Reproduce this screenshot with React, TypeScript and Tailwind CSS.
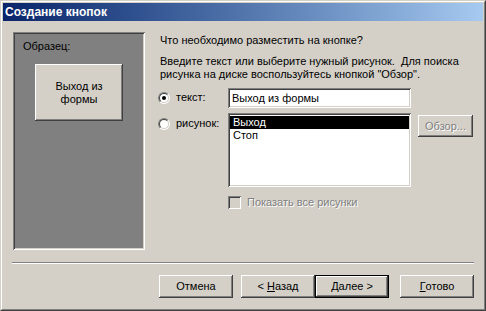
const raised =
  "shadow-[inset_-1px_-1px_#404040,inset_1px_1px_#ffffff,inset_-2px_-2px_#808080,inset_2px_2px_#d4d0c8]";
const sunken =
  "shadow-[inset_1px_1px_#808080,inset_-1px_-1px_#ffffff,inset_2px_2px_#404040,inset_-2px_-2px_#d4d0c8]";

const Radio = ({ checked }: { checked?: boolean }) => (
  <div className="w-[12px] h-[12px] rounded-full border border-t-[#808080] border-l-[#808080] border-r-white border-b-white shrink-0">
    <div className="w-full h-full rounded-full border border-t-[#404040] border-l-[#404040] border-r-[#d4d0c8] border-b-[#d4d0c8] bg-white flex items-center justify-center">
      {checked && <div className="w-[4px] h-[4px] rounded-full bg-black" />}
    </div>
  </div>
);

const Button = ({
  children,
  isDefault,
}: {
  children: React.ReactNode;
  isDefault?: boolean;
}) =>
  isDefault ? (
    <div className="w-[74px] h-[23px] border border-black">
      <div className={`w-full h-full flex items-center justify-center bg-[#d4d0c8] ${raised}`}>
        {children}
      </div>
    </div>
  ) : (
    <div className={`w-[74px] h-[23px] flex items-center justify-center bg-[#d4d0c8] ${raised}`}>
      {children}
    </div>
  );

export default function App() {
  return (
    <div className="w-[486px] h-[311px] bg-[#d4d0c8] border border-t-[#d4d0c8] border-l-[#d4d0c8] border-r-[#404040] border-b-[#404040] font-['Liberation_Sans',Arial,sans-serif] text-[11px] leading-[13px] text-black select-none">
      <div className="h-full border border-t-white border-l-white border-r-[#808080] border-b-[#808080] p-px flex flex-col">
        {/* title bar */}
        <div className="h-[18px] bg-linear-to-r from-[#0a246a] to-[#a6caf0] flex items-center pl-[2px]">
          <span className="text-white font-bold text-[12px]">Создание кнопок</span>
        </div>

        <div className="flex pt-[11px] pl-[10px]">
          {/* sample panel */}
          <div className={`w-[132px] h-[218px] bg-[#808080] ${sunken} pt-[8px] pl-[10px]`}>
            <div>Образец:</div>
            <div className={`mt-[11px] ml-[12px] w-[88px] h-[57px] bg-[#d4d0c8] ${raised} flex items-center justify-center text-center`}>
              Выход из
              <br />
              формы
            </div>
          </div>

          {/* right side */}
          <div className="ml-[13px] w-[315px] flex flex-col">
            <div className="mt-[2px] pl-[2px]">Что необходимо разместить на кнопке?</div>
            <div className="mt-[8px] pl-[2px]">
              Введите текст или выберите нужный рисунок.&nbsp; Для поиска
              <br />
              рисунка на диске воспользуйтесь кнопкой "Обзор".
            </div>

            <div className="mt-[7px] flex items-start">
              <div className="w-[70px] flex items-center gap-[6px] pt-[3px]">
                <Radio checked />
                <span>текст:</span>
              </div>
              <div className={`w-[183px] h-[20px] bg-white ${sunken} flex items-center pl-[4px]`}>
                Выход из формы
              </div>
            </div>

            <div className="mt-[5px] flex items-start">
              <div className="w-[70px] flex items-center gap-[6px] pt-[4px]">
                <Radio />
                <span>рисунок:</span>
              </div>
              <div className={`w-[183px] h-[74px] bg-white ${sunken} p-[2px] pt-[3px]`}>
                <div className="bg-black text-white pl-[3px]">Выход</div>
                <div className="pl-[3px]">Стоп</div>
              </div>
              <div className={`ml-[7px] mt-[2px] w-[55px] h-[22px] ${raised} flex items-center justify-center text-[#808080] [text-shadow:1px_1px_0_#ffffff]`}>
                Обзор...
              </div>
            </div>

            <div className="mt-[9px] ml-[70px] flex items-center gap-[6px]">
              <div className={`w-[13px] h-[13px] bg-[#d4d0c8] ${sunken}`} />
              <span className="text-[#808080] [text-shadow:1px_1px_0_#ffffff]">Показать все рисунки</span>
            </div>
          </div>
        </div>

        {/* separator */}
        <div className="mt-[12px] mx-[9px] h-[2px] border-t border-t-[#808080] border-b border-b-white" />

        {/* buttons */}
        <div className="mt-[11px] pr-[9px] flex justify-end">
          <Button>Отмена</Button>
          <div className="ml-[8px]">
            <Button>
              &lt;&nbsp;<span className="underline">Н</span>азад
            </Button>
          </div>
          <Button isDefault>
            <span className="underline">Д</span>алее &gt;
          </Button>
          <div className="ml-[11px]">
            <Button>
              <span className="underline">Г</span>отово
            </Button>
          </div>
        </div>
      </div>
    </div>
  );
}
